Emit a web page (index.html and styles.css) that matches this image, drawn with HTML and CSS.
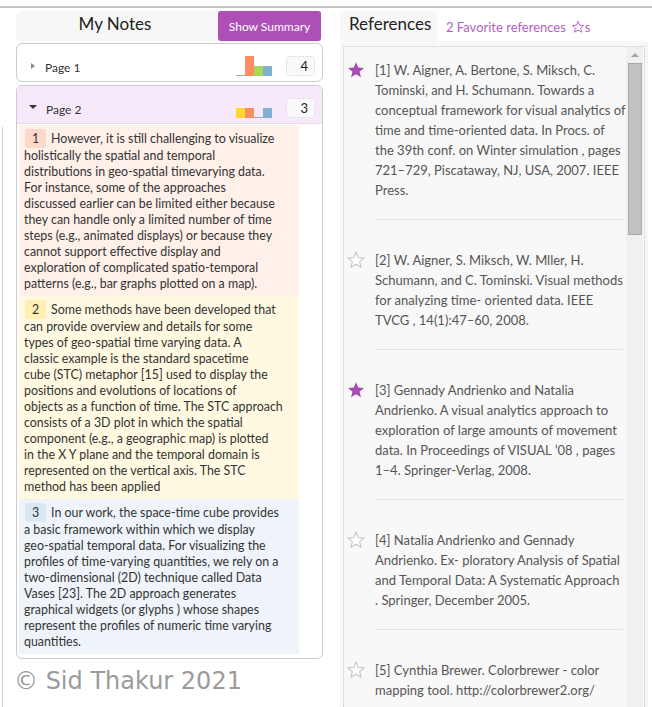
FILE: index.html
```html
<!DOCTYPE html>
<html>
<head>
<meta charset="utf-8">
<link rel="stylesheet" href="styles.css">
</head>
<body>
<div class="topline"></div>
<div class="edge-line"></div>
<div class="main">
  <section class="notes-col">
    <div class="notes-head">
      <h1 class="notes-title">My Notes</h1>
      <button class="summary-btn">Show Summary</button>
    </div>

    <div class="page">
      <div class="page-head">
        <span class="tri tri-right"></span>
        <span class="page-name">Page 1</span>
        <div class="bars">
          <span class="bar bar-zero"></span>
          <span class="bar orange" style="height:20px"></span>
          <span class="bar green" style="height:10px"></span>
          <span class="bar blue" style="height:10px"></span>
        </div>
        <span class="count">4</span>
      </div>
    </div>

    <div class="page page-open">
      <div class="page-head">
        <span class="tri tri-down"></span>
        <span class="page-name">Page 2</span>
        <div class="bars">
          <span class="bar yellow" style="height:10px"></span>
          <span class="bar orange" style="height:10px"></span>
          <span class="bar bar-zero"></span>
          <span class="bar blue" style="height:10px"></span>
        </div>
        <span class="count">3</span>
      </div>
      <div class="page-body">
        <div class="note note-pink"><span class="badge">1</span>However, it is still challenging to visualize<br>holistically the spatial and temporal<br>distributions in geo-spatial timevarying data.<br>For instance, some of the approaches<br>discussed earlier can be limited either because<br>they can handle only a limited number of time<br>steps (e.g., animated displays) or because they<br>cannot support effective display and<br>exploration of complicated spatio-temporal<br>patterns (e.g., bar graphs plotted on a map).</div>
        <div class="note note-yellow"><span class="badge">2</span>Some methods have been developed that<br>can provide overview and details for some<br>types of geo-spatial time varying data. A<br>classic example is the standard spacetime<br>cube (STC) metaphor [15] used to display the<br>positions and evolutions of locations of<br>objects as a function of time. The STC approach<br>consists of a 3D plot in which the spatial<br>component (e.g., a geographic map) is plotted<br>in the X Y plane and the temporal domain is<br>represented on the vertical axis. The STC<br>method has been applied</div>
        <div class="note note-blue"><span class="badge">3</span>In our work, the space-time cube provides<br>a basic framework within which we display<br>geo-spatial temporal data. For visualizing the<br>profiles of time-varying quantities, we rely on a<br>two-dimensional (2D) technique called Data<br>Vases [23]. The 2D approach generates<br>graphical widgets (or glyphs ) whose shapes<br>represent the profiles of numeric time varying<br>quantities.</div>
      </div>
    </div>

    <div class="copyright">© Sid Thakur 2021</div>
  </section>

  <section class="refs-col">
    <div class="refs-head">
      <div class="refs-tab">References</div>
      <div class="fav-count">2 Favorite references <svg class="fav-star" viewBox="0 0 24 24"><path d="M12 2.5l2.8 6.4 6.9.6-5.2 4.6 1.6 6.8L12 17.3l-6.1 3.6 1.6-6.8-5.2-4.6 6.9-.6z"/></svg>s</div>
    </div>
    <div class="refs-panel">
      <div class="refs-box">
        <div class="refs-list">
          <div class="ref">
            <svg class="star star-on" viewBox="0 0 24 24"><path d="M12 1.5l3 7.1 7.6.6-5.8 5 1.8 7.4L12 17.6l-6.6 4 1.8-7.4-5.8-5 7.6-.6z"/></svg>
            <div class="ref-body">
              <p class="ref-text">[1] W. Aigner, A. Bertone, S. Miksch, C.<br>Tominski, and H. Schumann. Towards a<br>conceptual framework for visual analytics of<br>time and time-oriented data. In Procs. of<br>the 39th conf. on Winter simulation , pages<br>721–729, Piscataway, NJ, USA, 2007. IEEE<br>Press.</p>
              <hr class="divider">
            </div>
          </div>
          <div class="ref">
            <svg class="star star-off" viewBox="0 0 24 24"><path d="M12 1.5l3 7.1 7.6.6-5.8 5 1.8 7.4L12 17.6l-6.6 4 1.8-7.4-5.8-5 7.6-.6z"/></svg>
            <div class="ref-body">
              <p class="ref-text">[2] W. Aigner, S. Miksch, W. Mller, H.<br>Schumann, and C. Tominski. Visual methods<br>for analyzing time- oriented data. IEEE<br>TVCG , 14(1):47–60, 2008.</p>
              <hr class="divider">
            </div>
          </div>
          <div class="ref">
            <svg class="star star-on" viewBox="0 0 24 24"><path d="M12 1.5l3 7.1 7.6.6-5.8 5 1.8 7.4L12 17.6l-6.6 4 1.8-7.4-5.8-5 7.6-.6z"/></svg>
            <div class="ref-body">
              <p class="ref-text">[3] Gennady Andrienko and Natalia<br>Andrienko. A visual analytics approach to<br>exploration of large amounts of movement<br>data. In Proceedings of VISUAL ’08 , pages<br>1–4. Springer-Verlag, 2008.</p>
              <hr class="divider">
            </div>
          </div>
          <div class="ref">
            <svg class="star star-off" viewBox="0 0 24 24"><path d="M12 1.5l3 7.1 7.6.6-5.8 5 1.8 7.4L12 17.6l-6.6 4 1.8-7.4-5.8-5 7.6-.6z"/></svg>
            <div class="ref-body">
              <p class="ref-text">[4] Natalia Andrienko and Gennady<br>Andrienko. Ex- ploratory Analysis of Spatial<br>and Temporal Data: A Systematic Approach<br>. Springer, December 2005.</p>
              <hr class="divider">
            </div>
          </div>
          <div class="ref">
            <svg class="star star-off" viewBox="0 0 24 24"><path d="M12 1.5l3 7.1 7.6.6-5.8 5 1.8 7.4L12 17.6l-6.6 4 1.8-7.4-5.8-5 7.6-.6z"/></svg>
            <div class="ref-body">
              <p class="ref-text">[5] Cynthia Brewer. Colorbrewer - color<br>mapping tool. http://colorbrewer2.org/</p>
            </div>
          </div>
        </div>
        <div class="scrollbar">
          <span class="scroll-up"></span>
          <span class="scroll-thumb"></span>
        </div>
      </div>
    </div>
  </section>
</div>
</body>
</html>
```
FILE: styles.css
```css
html, body {
  margin: 0;
  padding: 0;
  height: 707px;
  overflow: hidden;
  background: #fff;
  font-family: Lato, "Open Sans", sans-serif;
}

.topline {
  margin-top: 6px;
  border-top: 2px solid #c4c4c4;
}

.edge-line {
  position: absolute;
  left: 2px;
  top: 127px;
  bottom: 0;
  width: 1px;
  background: #cfcfcf;
}

.main {
  display: flex;
  gap: 17px;
  padding: 3px 0 0 16px;
}

/* ---------- Notes ---------- */
.notes-col {
  width: 307px;
  flex: none;
}

.notes-head {
  display: flex;
  height: 30px;
  background: #f7f7f7;
  border-radius: 6px 0 0 0;
}

.notes-title {
  flex: 1;
  margin: 0;
  font-size: 17px;
  font-weight: 400;
  color: #222;
  text-align: center;
  line-height: 26px;
  padding-right: 4px;
}

.summary-btn {
  width: 103px;
  height: 30px;
  margin-right: 2px;
  border: none;
  border-radius: 3px;
  background: #ad4fb6;
  color: #fff;
  font-family: Lato, "Open Sans", sans-serif;
  font-size: 12px;
  padding: 0;
}

.page {
  margin-top: 2px;
  border: 1px solid #cccccc;
  border-radius: 6px;
  background: #fff;
  overflow: hidden;
}

.page-open {
  margin-top: 3px;
}

.page-head {
  display: flex;
  align-items: center;
  height: 20px;
  padding: 12px 7px 5px 13px;
}

.page-open .page-head {
  background: #f6eafa;
  border-bottom: 1px dotted #cfcfcf;
}

.tri {
  width: 0;
  height: 0;
  flex: none;
}

.tri-right {
  margin: 0 10px 0 1px;
  border-top: 3px solid transparent;
  border-bottom: 3px solid transparent;
  border-left: 4px solid #888;
}

.tri-down {
  margin: -3px 9px 0 -1px;
  border-left: 4px solid transparent;
  border-right: 4px solid transparent;
  border-top: 4px solid #333;
}

.page-name {
  flex: 1;
  font-size: 12px;
  color: #333;
  padding-top: 2px;
}

.bars {
  display: flex;
  align-items: flex-end;
  height: 20px;
  margin-right: 14px;
}

.bar {
  width: 9px;
}

.bar-zero {
  height: 1px;
  background: #a8a8a8;
}

.orange { background: #fc8d62; }
.green  { background: #a6d854; }
.blue   { background: #80b1d3; }
.yellow { background: #ffd92f; }

.count {
  width: 29px;
  height: 20px;
  box-sizing: border-box;
  border: 1px dotted #d4d4d4;
  border-radius: 5px;
  background: #fafafa;
  font-size: 13px;
  color: #222;
  text-align: right;
  padding-right: 6px;
  line-height: 18px;
}

.page-body {
  padding: 1px 23px 4px 2px;
}

.note {
  padding: 4px 5px 4px 5px;
  font-size: 12.4px;
  line-height: 16px;
  color: #333;
  white-space: nowrap;
}

.badge {
  display: inline-block;
  width: 21px;
  height: 19px;
  line-height: 19px;
  text-align: center;
  margin: 0 5px 0 1px;
  border-radius: 3px;
}

.note-pink   { background: #fff0ea; }
.note-yellow { background: #fff9e1; }
.note-blue   { background: #eef4f9; }
.note-pink .badge   { background: #fed9cb; }
.note-yellow .badge { background: #ffefb3; }
.note-blue .badge   { background: #dbe7f1; }

.copyright {
  margin-top: 8px;
  margin-left: -2px;
  font-family: "DejaVu Sans", sans-serif;
  font-size: 24px;
  color: #9b9b9b;
}

/* ---------- References ---------- */
.refs-col {
  width: 308px;
  flex: none;
}

.refs-head {
  display: flex;
  align-items: center;
  height: 30px;
}

.refs-tab {
  width: 89px;
  height: 30px;
  padding-left: 9px;
  background: #f7f7f7;
  border-radius: 6px 6px 0 0;
  font-size: 17px;
  color: #222;
  line-height: 26px;
}

.fav-count {
  margin-left: 8px;
  font-size: 13px;
  color: #b35fc2;
  display: flex;
  align-items: center;
  padding-top: 2px;
}

.fav-star {
  width: 14px;
  height: 14px;
  margin-left: 5px;
  fill: none;
  stroke: #b35fc2;
  stroke-width: 1.6;
}

.refs-panel {
  background: #f7f7f7;
  padding: 5px 3px 0 3px;
  height: 680px;
}

.refs-box {
  display: flex;
  height: 100%;
  border: 1px dotted #c8c8c8;
  border-bottom: none;
  background: #f8f8f8;
}

.refs-list {
  flex: 1;
  padding: 13px 0 0 3px;
  overflow: hidden;
}

.ref {
  display: flex;
}

.star {
  width: 18px;
  height: 18px;
  flex: none;
  margin: 1px 10px 0 0;
}

.star-on path {
  fill: #a64db3;
}

.star-off path {
  fill: #fff;
  stroke: #c4c4c4;
  stroke-width: 1.4;
}

.ref-body {
  width: 248px;
}

.ref-text {
  margin: 0;
  font-size: 13px;
  line-height: 20px;
  color: #555;
  white-space: nowrap;
}

.divider {
  margin: 19px 0 30px 0;
  border: none;
  border-top: 1px solid #ebe0da;
}

.scrollbar {
  width: 17px;
  margin-right: 1px;
  background: #f0f0f0;
  display: flex;
  flex-direction: column;
  align-items: center;
}

.scroll-up {
  margin-top: 6px;
  width: 0;
  height: 0;
  border-left: 4px solid transparent;
  border-right: 4px solid transparent;
  border-bottom: 4px solid #a3a3a3;
}

.scroll-thumb {
  margin-top: 6px;
  width: 12px;
  height: 170px;
  background: #c1c1c1;
  border: 1px solid #a9a9a9;
}
```
